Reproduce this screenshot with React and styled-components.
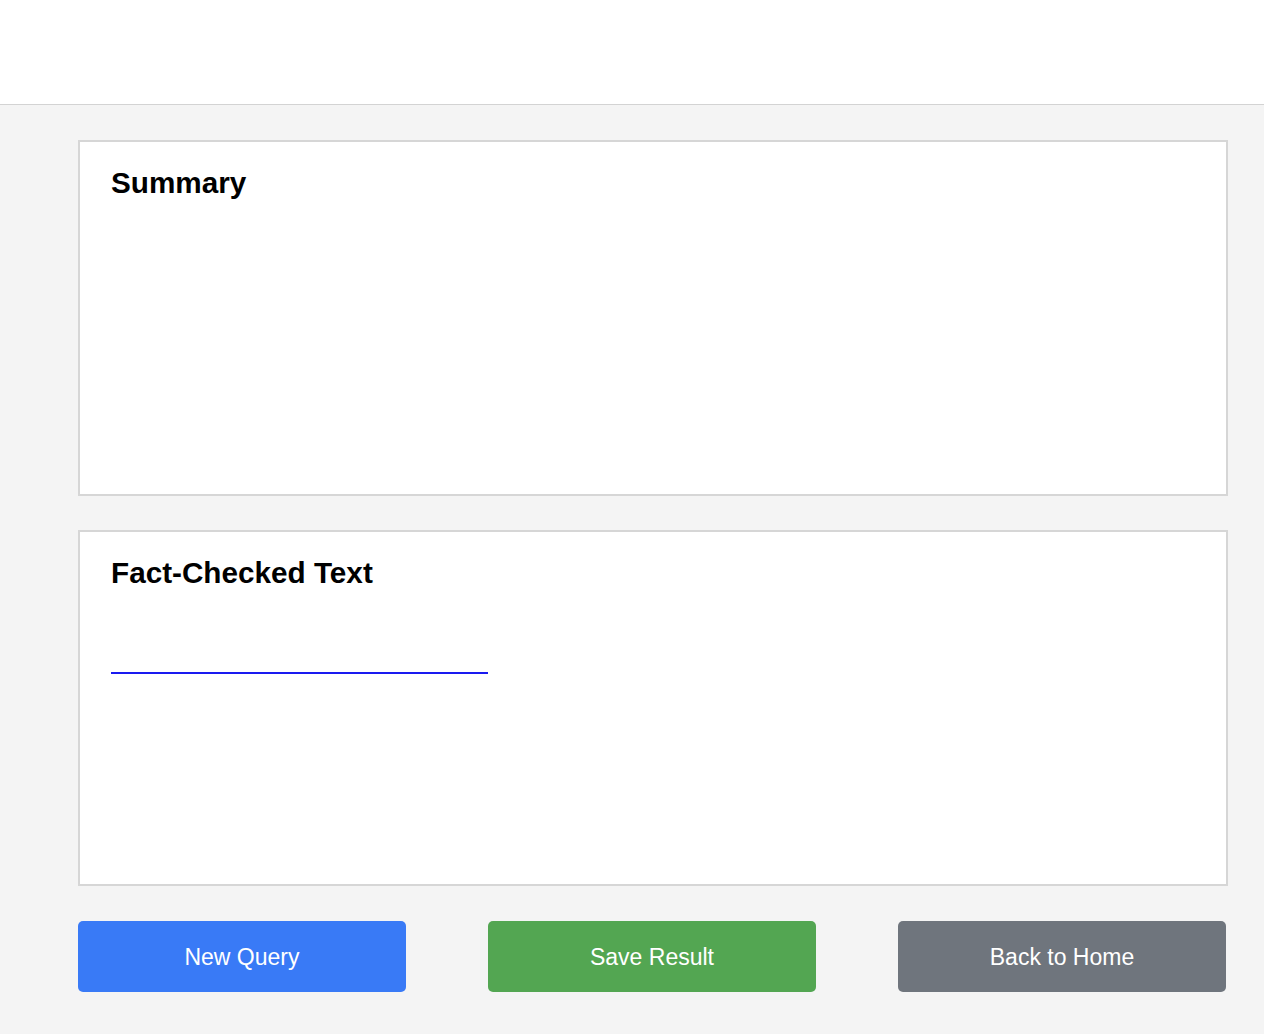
import React from "react";
import styled, { createGlobalStyle } from "styled-components";

const Global = createGlobalStyle`
  html, body {
    margin: 0;
    padding: 0;
    background: #f4f4f4;
    font-family: "Liberation Sans", Arial, sans-serif;
  }
`;

export default function App() {
  return (
    <>
      <Global />
      <Header />
      <Main>
        <Card>
          <Title>Summary</Title>
        </Card>
        <Card>
          <Title>Fact-Checked Text</Title>
          <LinkLine />
        </Card>
        <Actions>
          <Button $bg="#397af6">New Query</Button>
          <Button $bg="#53a652">Save Result</Button>
          <Button $bg="#6f757d">Back to Home</Button>
        </Actions>
      </Main>
    </>
  );
}

const Header = styled.header`
  height: 104px;
  background: #ffffff;
  border-bottom: 1px solid #d3d3d3;
`;

const Main = styled.main`
  display: flex;
  flex-direction: column;
  gap: 34px;
  padding: 35px 36px 42px 78px;
`;

const Card = styled.section`
  box-sizing: border-box;
  height: 356px;
  background: #ffffff;
  border: 2px solid #d6d6d6;
  padding: 24px 31px;
`;

const Title = styled.h2`
  margin: 0;
  font-family: "Liberation Sans", Arial, sans-serif;
  font-weight: 700;
  font-size: 29.7px;
  line-height: 34px;
  color: #000;
`;

const LinkLine = styled.div`
  width: 377px;
  height: 2px;
  margin-top: 82px;
  background: #1a1af0;
`;

const Actions = styled.div`
  display: grid;
  grid-template-columns: repeat(3, 328px);
  column-gap: 82px;
  margin-top: 1px;
`;

const Button = styled.button`
  height: 71px;
  border: none;
  border-radius: 5px;
  background: ${(p) => p.$bg};
  color: #ffffff;
  font-family: "Liberation Sans", Arial, sans-serif;
  font-size: 23px;
  padding-top: 2px;
  cursor: pointer;
`;
